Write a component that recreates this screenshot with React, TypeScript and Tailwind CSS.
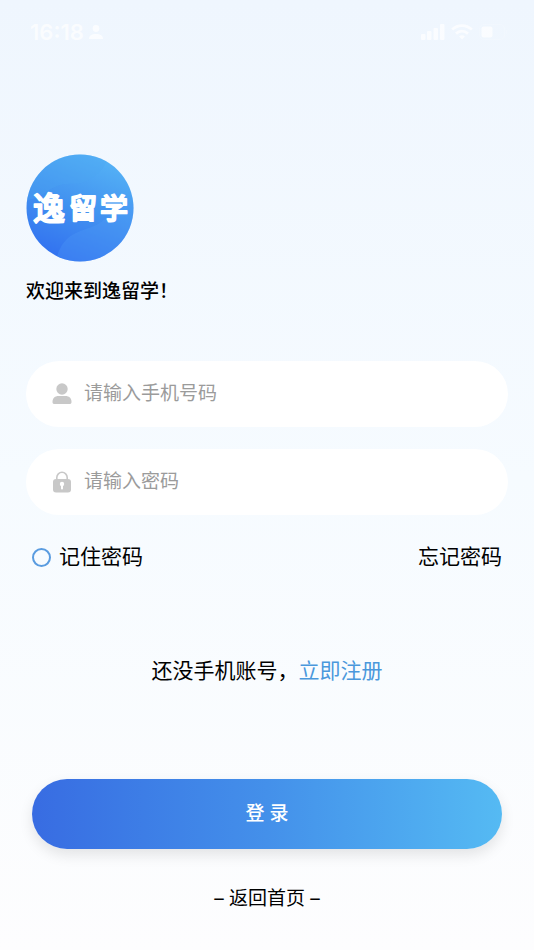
import React, { useState } from 'react';

const StatusBar: React.FC = () => (
  <div className="flex items-center justify-between pl-1 pt-5 h-11 text-white/70">
    <div className="flex items-center gap-1">
      <span className="text-[22px] leading-6 font-semibold">16:18</span>
      <svg width="16" height="16" viewBox="0 0 16 16" fill="currentColor" aria-hidden="true">
        <circle cx="8" cy="4.500" r="3.400" />
        <path d="M1 15c0-3.500 2.400-5 7-5s7 1.500 7 5z" />
      </svg>
    </div>
    <div className="flex items-center gap-[6px]">
      <svg width="24" height="16" viewBox="0 0 24 16" fill="currentColor" aria-hidden="true">
        <rect x="0" y="10" width="4.500" height="6" rx="1" />
        <rect x="6" y="7" width="4.500" height="9" rx="1" />
        <rect x="12.500" y="4" width="4.500" height="12" rx="1" />
        <rect x="19" y="0" width="4.500" height="16" rx="1" />
      </svg>
      <svg width="22" height="16" viewBox="0 0 22 16" fill="none" stroke="currentColor" strokeWidth="2.800" aria-hidden="true">
        <path d="M1.200 5.600c5.600-5.400 14-5.400 19.600 0" />
        <path d="M5 9.600c3.500-3.200 8.500-3.200 12 0" />
        <path d="M8 12.400c1.800-1.500 4.200-1.500 6 0l-3 3.100z" fill="currentColor" stroke="none" />
      </svg>
      <svg width="29" height="16" viewBox="0 0 29 16" fill="none" aria-hidden="true">
        <rect x="0.500" y="0.500" width="25" height="15" rx="4.500" stroke="currentColor" strokeOpacity="0.250" />
        <rect x="2.500" y="2.500" width="11" height="11" rx="2" fill="currentColor" />
        <path d="M27 5.500v5c1.600-.6 1.600-4.400 0-5z" fill="currentColor" fillOpacity="0.250" />
      </svg>
    </div>
  </div>
);

const Logo: React.FC = () => (
  <svg width="108" height="108" viewBox="0 0 108 108" role="img" aria-label="逸留学">
    <defs>
      <linearGradient id="logoBg" x1="0.700" y1="0" x2="0.300" y2="1">
        <stop offset="0" stopColor="#55b3f6" />
        <stop offset="0.500" stopColor="#4292f0" />
        <stop offset="1" stopColor="#3170f0" />
      </linearGradient>
      <clipPath id="logoClip">
        <circle cx="54" cy="54" r="53.500" />
      </clipPath>
    </defs>
    <g clipPath="url(#logoClip)">
      <rect width="108" height="108" fill="url(#logoBg)" />
      <path d="M0 46c16-1 22-12 34-15s18 2 32-7 12-16 20-24H0z" fill="#4ba6f3" fillOpacity="0.300" />
      <path d="M30 108c2-14 9-24 20-29s20-6 28-13 14-15 30-16v58z" fill="#4f9cf8" fillOpacity="0.300" />
    </g>
    <g
      fill="#fff"
      stroke="#fff"
      strokeWidth="1.800"
      strokeLinejoin="round"
      fontWeight="500"
      textAnchor="middle"
    >
      <text x="23" y="66" fontSize="32">逸</text>
      <text x="57" y="65" fontSize="28">留</text>
      <text x="88" y="65" fontSize="28">学</text>
    </g>
  </svg>
);

const UserIcon: React.FC = () => (
  <svg width="20" height="22" viewBox="0 0 20 22" fill="#c8c8c8" className="shrink-0" aria-hidden="true">
    <circle cx="10" cy="6" r="5.700" />
    <path d="M0.500 19c0-4 2.500-6 6-6h7c3.500 0 6 2 6 6 0 1.400-.8 2-2 2h-15c-1.200 0-2-.6-2-2z" />
  </svg>
);

const LockIcon: React.FC = () => (
  <svg width="20" height="22" viewBox="0 0 20 22" fill="none" className="shrink-0" aria-hidden="true">
    <path d="M4.800 9V6.500a5.200 5.200 0 0 1 10.400 0V9" stroke="#c8c8c8" strokeWidth="1.600" />
    <rect x="1" y="8" width="18" height="13.500" rx="3" fill="#c8c8c8" />
    <circle cx="10" cy="13" r="2.200" fill="#fff" />
    <path d="M9 13h2v4.500a1 1 0 0 1-2 0z" fill="#fff" />
  </svg>
);

interface FieldProps {
  icon: React.ReactNode;
  type: string;
  label: string;
  value: string;
  onChange: (value: string) => void;
}

const Field: React.FC<FieldProps> = ({ icon, type, label, value, onChange }) => (
  <label className="flex items-center gap-3 h-[66px] px-[26px] rounded-full bg-white">
    {icon}
    <input
      type={type}
      aria-label={label}
      placeholder={label}
      value={value}
      onChange={(e) => onChange(e.target.value)}
      className="flex-1 min-w-0 bg-transparent text-[19px] leading-7 text-black placeholder:text-[#9b9b9b] outline-none"
    />
  </label>
);

export default function App() {
  const [phone, setPhone] = useState('');
  const [password, setPassword] = useState('');
  const [remember, setRemember] = useState(false);

  return (
    <main className="min-h-screen px-[26px] bg-linear-to-b from-[#eff6fe] via-[#f6fbff] to-[#fdfdfe] font-[Inter,'Noto_Sans_CJK_SC',sans-serif] text-black">
      <StatusBar />

      <header className="pt-[110px]">
        <Logo />
        <h1 className="mt-[14px] text-[19px] leading-8 font-medium">欢迎来到逸留学！</h1>
      </header>

      <form onSubmit={(e) => e.preventDefault()}>
        <div className="flex flex-col gap-[22px] mt-[53px]">
          <Field icon={<UserIcon />} type="tel" label="请输入手机号码" value={phone} onChange={setPhone} />
          <Field icon={<LockIcon />} type="password" label="请输入密码" value={password} onChange={setPassword} />
        </div>

        <div className="flex items-center justify-between mt-[26px] px-[6px] text-[21px] leading-8">
          <label className="flex items-center gap-2">
            <input
              type="checkbox"
              checked={remember}
              onChange={(e) => setRemember(e.target.checked)}
              className="appearance-none size-[19px] rounded-full border-2 border-[#5a9ce0] checked:bg-[#5a9ce0]"
            />
            记住密码
          </label>
          <a href="#forgot">忘记密码</a>
        </div>

        <p className="mt-[82px] text-center text-[21px] leading-8">
          还没手机账号，<a href="#register" className="text-[#4a98dc]">立即注册</a>
        </p>

        <div className="mt-[92px] px-[6px]">
          <button
            type="submit"
            className="block w-full h-[70px] rounded-full bg-linear-to-r from-[#386ce2] via-[#4490ea] to-[#55baf3] text-[19px] font-medium text-white shadow-[0_6px_14px_rgba(0,0,0,0.10)]"
          >
            登 录
          </button>
        </div>
      </form>

      <footer className="mt-[34px] pb-8 text-center text-[19px] leading-8">
        <a href="#home">– 返回首页 –</a>
      </footer>
    </main>
  );
}
